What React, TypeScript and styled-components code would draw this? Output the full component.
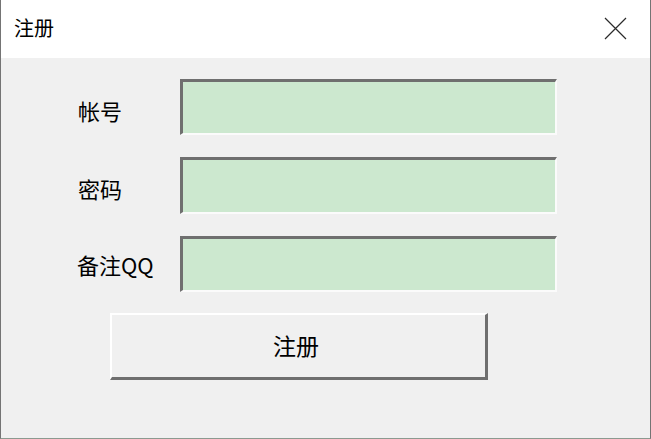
import React from "react";
import styled, { createGlobalStyle } from "styled-components";

const Global = createGlobalStyle`
  html, body { margin: 0; padding: 0; background: #f0f0f0; }
  body { font-family: "Noto Sans CJK SC", "Noto Sans", sans-serif; }
`;

const Window = styled.div`
  width: 651px;
  height: 439px;
  box-sizing: border-box;
  border-left: 1px solid #747474;
  border-right: 1px solid #747474;
  border-bottom: 1px solid #8c9a90;
  background: #f0f0f0;
  display: flex;
  flex-direction: column;
`;

const TitleBar = styled.div`
  height: 58px;
  flex: none;
  background: #ffffff;
  display: flex;
  align-items: center;
  justify-content: space-between;
  padding: 0 23px 3px 13px;
  box-sizing: border-box;
`;

const Title = styled.span`
  font-size: 20px;
  color: #000;
  line-height: 1;
`;

const CloseButton = styled.div`
  width: 23px;
  height: 23px;
  display: flex;
  align-items: center;
  justify-content: center;
  margin-top: 2px;
`;

const Body = styled.div`
  flex: 1;
  padding: 21px 0 0 0;
  display: flex;
  flex-direction: column;
`;

const Form = styled.div`
  display: grid;
  grid-template-columns: 102px 377px;
  grid-template-rows: 56px 57px 56px;
  row-gap: 22px;
  padding-left: 77px;
`;

const Label = styled.label<{ $shift?: number }>`
  display: flex;
  align-items: center;
  font-size: 22px;
  color: #000;
  line-height: 1;
  margin-left: ${(p) => p.$shift ?? 0}px;
  padding-top: ${(p) => (p.$shift ? 0 : 5)}px;
`;

const Field = styled.input`
  box-sizing: border-box;
  width: 377px;
  height: 100%;
  margin: 0;
  padding: 0 6px;
  background: #cce8cf;
  border-style: solid;
  border-width: 3px 2px 2px 3px;
  border-color: #6f6f6f #fbfbfb #fbfbfb #6f6f6f;
  outline: none;
  font-size: 18px;
  font-family: inherit;
`;

const SubmitButton = styled.button`
  margin: 21px 0 0 109px;
  width: 378px;
  height: 67px;
  box-sizing: border-box;
  background: #f0f0f0;
  border-style: solid;
  border-width: 2px 3px 3px 2px;
  border-color: #ffffff #6f6f6f #6f6f6f #ffffff;
  font-family: inherit;
  font-size: 23px;
  color: #000;
  line-height: 1;
  padding: 0 5px 2px 0;
  cursor: pointer;
`;

export default function App() {
  return (
    <>
      <Global />
      <Window>
        <TitleBar>
          <Title>注册</Title>
          <CloseButton>
            <svg width="23" height="23" viewBox="0 0 23 23">
              <path d="M1 1 L22 22 M22 1 L1 22" stroke="#2b2b2b" strokeWidth="1.2" fill="none" />
            </svg>
          </CloseButton>
        </TitleBar>
        <Body>
          <Form>
            <Label>帐号</Label>
            <Field />
            <Label>密码</Label>
            <Field />
            <Label $shift={-1}>备注QQ</Label>
            <Field />
          </Form>
          <SubmitButton>注册</SubmitButton>
        </Body>
      </Window>
    </>
  );
}
